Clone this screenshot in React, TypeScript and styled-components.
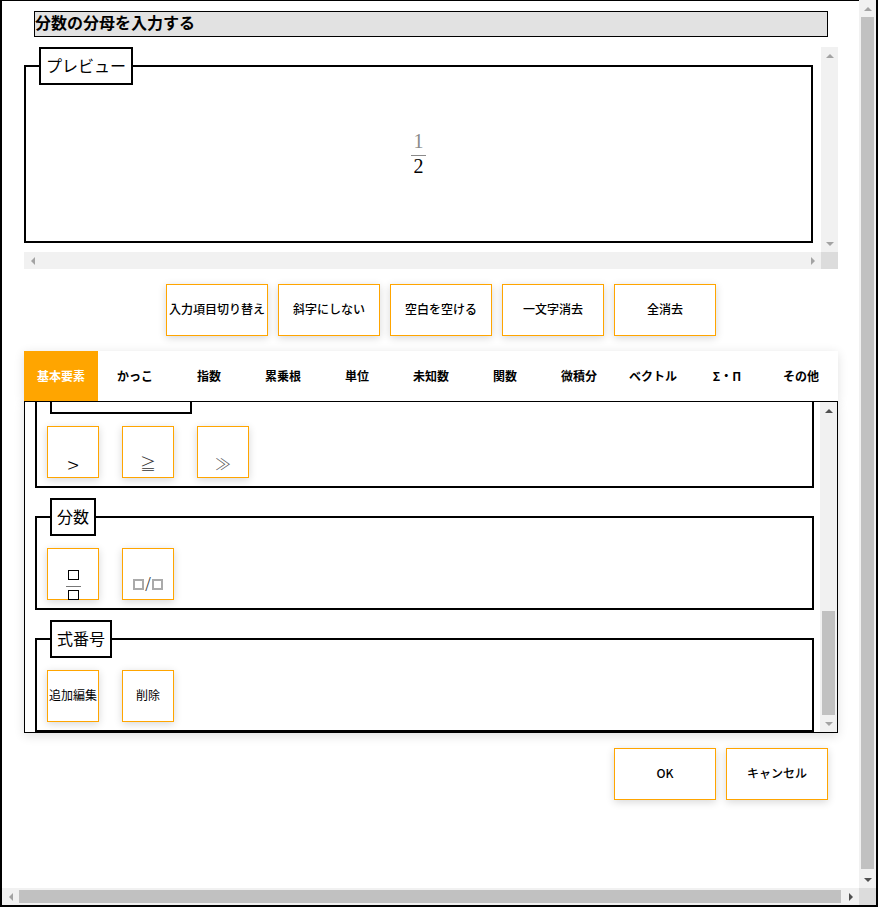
import React from "react";
import styled, { createGlobalStyle } from "styled-components";

const Global = createGlobalStyle`
  html, body { margin: 0; padding: 0; background: #fff; }
  body { font-family: "Noto Sans CJK JP", "Noto Sans", sans-serif; color: #000; }
  * { box-sizing: border-box; }
`;

const Frame = styled.div`
  width: 878px;
  height: 907px;
  border: 2px solid #000;
  border-top: 0;
  display: grid;
  grid-template-columns: 857px 17px;
  grid-template-rows: 888px 17px;
`;

const Content = styled.main`
  border-top: 1px solid #000;
  padding: 10px 21px 0 22px;
  overflow: hidden;
  background: #fff;
`;

const Title = styled.h1`
  margin: 0 0 10px 10px;
  width: 794px;
  height: 26px;
  border: 1px solid #000;
  background: #e2e2e2;
  font-size: 16px;
  line-height: 20px;
  font-weight: 700;
`;

const VBar = styled.div`
  width: 17px;
  background: #f1f1f1;
  display: flex;
  flex-direction: column;
  flex: none;
`;

const HBar = styled.div`
  height: 17px;
  background: #f1f1f1;
  display: flex;
  flex: none;
`;

const Corner = styled.div`
  width: 17px;
  height: 17px;
  background: #dcdcdc;
  flex: none;
`;

const ArrowBox = styled.span`
  width: 17px;
  height: 17px;
  flex: none;
  display: flex;
  align-items: center;
  justify-content: center;
`;

const VTrack = styled.div`
  flex: 1;
  min-height: 0;
`;

const HTrack = styled.div`
  flex: 1;
  min-width: 0;
`;

const VThumb = styled.div<{ $top: number; $length: number }>`
  width: 13px;
  margin: ${(p) => p.$top}px 0 0 2px;
  height: ${(p) => p.$length}px;
  background: #c1c1c1;
`;

const HThumb = styled.div<{ $length: number }>`
  height: 13px;
  margin-top: 2px;
  width: ${(p) => p.$length}px;
  background: #c1c1c1;
`;

const ARROWS: Record<string, string> = {
  up: "0,4 8,4 4,0",
  down: "0,0 8,0 4,4",
  left: "4,0 4,8 0,4",
  right: "0,0 0,8 4,4",
};

const Arrow = ({ dir, dark }: { dir: "up" | "down" | "left" | "right"; dark?: boolean }) => {
  const vertical = dir === "up" || dir === "down";
  return (
    <ArrowBox>
      <svg width={vertical ? 8 : 4} height={vertical ? 4 : 8} viewBox={vertical ? "0 0 8 4" : "0 0 4 8"}>
        <polygon points={ARROWS[dir]} fill={dark ? "#505050" : "#a3a3a3"} />
      </svg>
    </ArrowBox>
  );
};

const PreviewBox = styled.section`
  width: 814px;
  height: 222px;
  display: grid;
  grid-template-columns: 797px 17px;
  grid-template-rows: 205px 17px;
`;

const PreviewArea = styled.div`
  overflow: hidden;
`;

const Group = styled.fieldset<{ $width: number; $height: number }>`
  width: ${(p) => p.$width}px;
  min-width: 0;
  height: ${(p) => p.$height}px;
  margin: 0;
  padding: 0 10px;
  border: 2px solid #000;
`;

const Legend = styled.legend<{ $minWidth?: number }>`
  margin-left: 3px;
  padding: 4px 5px 6px;
  border: 2px solid #000;
  background: #fff;
  font-size: 16px;
  line-height: 24px;
  height: 38px;
  min-width: ${(p) => p.$minWidth ?? 0}px;
`;

const PreviewMath = styled.div`
  height: 138px;
  padding-top: 45px;
  display: flex;
  justify-content: center;
`;

const PreviewFraction = styled.div`
  width: 15px;
  display: flex;
  flex-direction: column;
  align-items: center;
  font-family: "Liberation Serif", "DejaVu Serif", serif;
  font-size: 20px;
  line-height: 23px;
`;

const Numerator = styled.span`
  color: #8a8a8a;
`;

const FractionRule = styled.span`
  width: 15px;
  height: 1px;
  background: #8a8a8a;
  margin: 2px 0 0;
`;

const Denominator = styled.span`
  color: #000;
  margin-top: -1px;
`;

const Toolbar = styled.div`
  width: 814px;
  margin: 15px 0;
  padding-left: 20px;
  display: flex;
  justify-content: center;
  gap: 10px;
`;

const ActionButton = styled.button`
  width: 102px;
  height: 52px;
  flex: none;
  padding: 0 0 3px;
  background: #fff;
  border: 1px solid #ffa500;
  border-radius: 0;
  box-shadow: 0 2px 8px rgba(0, 0, 0, 0.16);
  font-family: inherit;
  font-size: 12px;
  font-weight: 500;
  color: #000;
  white-space: nowrap;
`;

const Tabs = styled.nav`
  width: 814px;
  display: grid;
  grid-template-columns: repeat(11, 74px);
  height: 50px;
  background: #fff;
  box-shadow: 0 2px 10px rgba(0, 0, 0, 0.12);
`;

const Tab = styled.div<{ $active?: boolean }>`
  display: flex;
  align-items: center;
  justify-content: center;
  padding-bottom: 2px;
  font-size: 12px;
  font-weight: 700;
  white-space: nowrap;
  background: ${(p) => (p.$active ? "#ffa500" : "#fff")};
  color: ${(p) => (p.$active ? "#fff" : "#000")};
`;

const Panel = styled.section`
  width: 814px;
  height: 332px;
  border: 1px solid #000;
  background: #fff;
  display: flex;
  box-shadow: 0 3px 10px rgba(0, 0, 0, 0.12);
`;

const PanelScroll = styled.div`
  width: 795px;
  height: 330px;
  overflow: hidden;
`;

const PanelContent = styled.div`
  margin-top: -26px;
  padding-left: 10px;
  display: flex;
  flex-direction: column;
  gap: 10px;
`;

const KeyRow = styled.div`
  display: flex;
  gap: 23px;
  padding-top: 12px;
`;

const KeyButton = styled.button<{ $symbol?: boolean }>`
  width: 52px;
  height: 52px;
  padding: 0 0 ${(p) => (p.$symbol ? 0 : 3)}px;
  flex: none;
  display: flex;
  justify-content: center;
  align-items: ${(p) => (p.$symbol ? "flex-end" : "center")};
  background: #fff;
  border: 1px solid #ffa500;
  border-radius: 0;
  box-shadow: 0 2px 8px rgba(0, 0, 0, 0.16);
  font-family: inherit;
  font-size: 12px;
  color: #000;
  white-space: nowrap;
  overflow: visible;
`;

const Symbol = styled.span<{ $color?: string; $size?: number; $drop?: number }>`
  font-family: "Noto Sans CJK JP", "Liberation Serif", serif;
  font-weight: 300;
  font-size: ${(p) => p.$size ?? 15}px;
  line-height: 22px;
  margin-bottom: ${(p) => p.$drop ?? 1}px;
  color: ${(p) => p.$color ?? "#000"};
`;

const StackedFraction = styled.span`
  display: flex;
  flex-direction: column;
  align-items: center;
  margin-bottom: -1px;
`;

const Box = styled.span`
  display: block;
  width: 11px;
  height: 10px;
  border: 1px solid #000;
`;

const KeyRule = styled.span`
  display: block;
  width: 15px;
  height: 1px;
  margin: 6px 0 3px;
  background: #777;
`;

const InlineFraction = styled.span`
  display: flex;
  align-items: center;
  margin-bottom: 7px;
  gap: 1px;
`;

const GreyBox = styled.span`
  display: block;
  width: 11px;
  height: 11px;
  border: 2px solid #aaa;
`;

const Slash = styled.span`
  font-family: "Liberation Serif", serif;
  font-size: 20px;
  line-height: 16px;
  color: #444;
`;

const Footer = styled.div`
  width: 804px;
  margin: 15px 0 0;
  display: flex;
  justify-content: flex-end;
  gap: 10px;
`;

const TOOLS = ["入力項目切り替え", "斜字にしない", "空白を空ける", "一文字消去", "全消去"];
const TABS = ["基本要素", "かっこ", "指数", "累乗根", "単位", "未知数", "関数", "微積分", "ベクトル", "Σ・Π", "その他"];

export default function App() {
  return (
    <>
      <Global />
      <Frame>
        <Content>
          <Title>分数の分母を入力する</Title>
          <PreviewBox>
            <PreviewArea>
              <Group $width={789} $height={196}>
                <Legend>プレビュー</Legend>
                <PreviewMath>
                  <PreviewFraction>
                    <Numerator>1</Numerator>
                    <FractionRule />
                    <Denominator>2</Denominator>
                  </PreviewFraction>
                </PreviewMath>
              </Group>
            </PreviewArea>
            <VBar>
              <Arrow dir="up" />
              <VTrack />
              <Arrow dir="down" />
            </VBar>
            <HBar>
              <Arrow dir="left" />
              <HTrack />
              <Arrow dir="right" />
            </HBar>
            <Corner />
          </PreviewBox>

          <Toolbar>
            {TOOLS.map((t) => (
              <ActionButton key={t}>{t}</ActionButton>
            ))}
          </Toolbar>

          <Tabs>
            {TABS.map((t, i) => (
              <Tab key={t} $active={i === 0}>
                {t}
              </Tab>
            ))}
          </Tabs>

          <Panel>
            <PanelScroll>
              <PanelContent>
                <Group $width={779} $height={112}>
                  <Legend $minWidth={142} />
                  <KeyRow>
                    <KeyButton $symbol><Symbol $size={21} $drop={2}>&gt;</Symbol></KeyButton>
                    <KeyButton $symbol><Symbol $size={16} $color="#333" $drop={3}>≧</Symbol></KeyButton>
                    <KeyButton $symbol><Symbol $size={16} $color="#555" $drop={3}>≫</Symbol></KeyButton>
                  </KeyRow>
                </Group>
                <Group $width={779} $height={112}>
                  <Legend>分数</Legend>
                  <KeyRow>
                    <KeyButton $symbol>
                      <StackedFraction>
                        <Box />
                        <KeyRule />
                        <Box />
                      </StackedFraction>
                    </KeyButton>
                    <KeyButton $symbol>
                      <InlineFraction>
                        <GreyBox />
                        <Slash>/</Slash>
                        <GreyBox />
                      </InlineFraction>
                    </KeyButton>
                  </KeyRow>
                </Group>
                <Group $width={779} $height={112}>
                  <Legend>式番号</Legend>
                  <KeyRow>
                    <KeyButton>追加編集</KeyButton>
                    <KeyButton>削除</KeyButton>
                  </KeyRow>
                </Group>
              </PanelContent>
            </PanelScroll>
            <VBar>
              <Arrow dir="up" dark />
              <VTrack>
                <VThumb $top={192} $length={104} />
              </VTrack>
              <Arrow dir="down" />
            </VBar>
          </Panel>

          <Footer>
            <ActionButton>OK</ActionButton>
            <ActionButton>キャンセル</ActionButton>
          </Footer>
        </Content>

        <VBar>
          <Arrow dir="up" />
          <VTrack>
            <VThumb $top={0} $length={852} />
          </VTrack>
          <Arrow dir="down" dark />
        </VBar>
        <HBar>
          <Arrow dir="left" />
          <HTrack>
            <HThumb $length={822} />
          </HTrack>
          <Arrow dir="right" dark />
        </HBar>
        <Corner />
      </Frame>
    </>
  );
}
